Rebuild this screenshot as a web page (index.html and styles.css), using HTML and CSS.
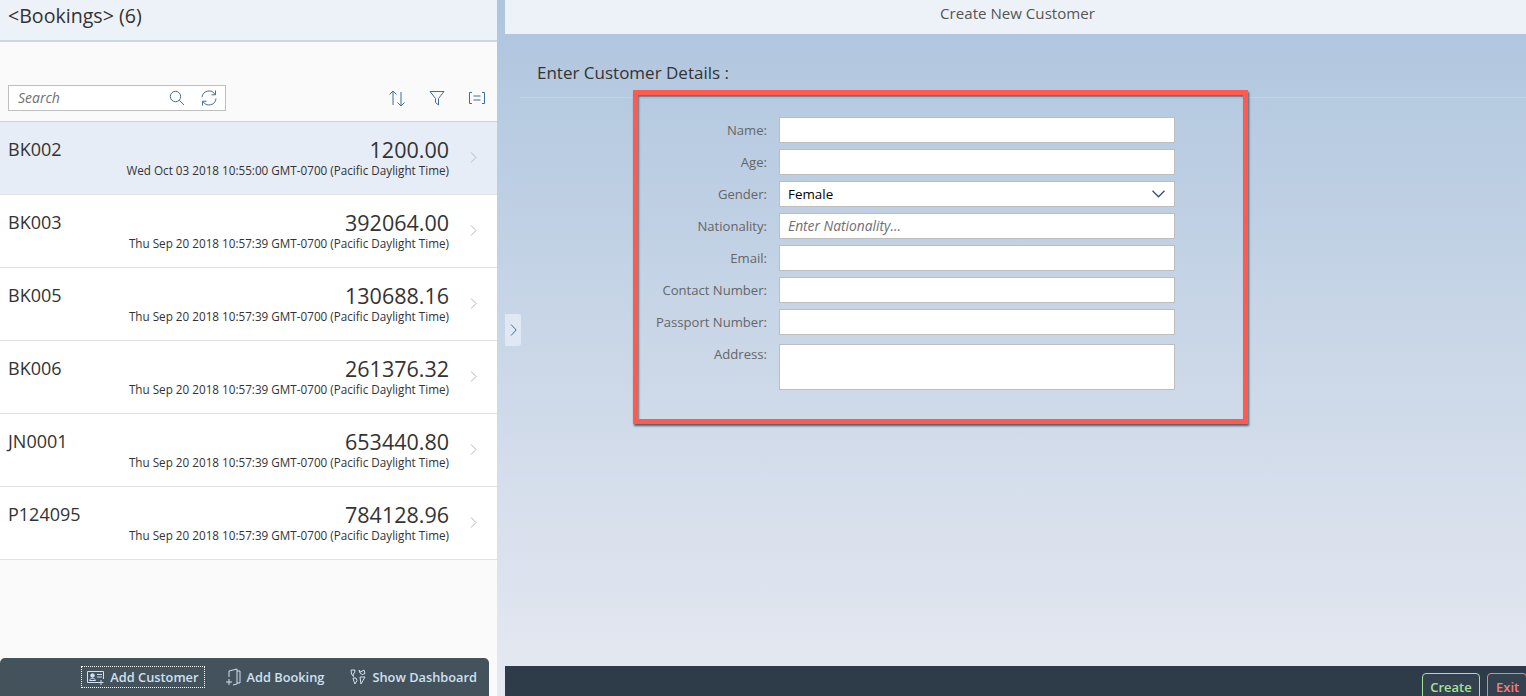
FILE: index.html
```html
<!DOCTYPE html>
<html lang="en">
<head>
    <meta charset="UTF-8">
    <title>Create New Customer</title>
    <link rel="stylesheet" href="styles.css">
</head>
<body>
    <div class="master">
        <div class="master-header">&lt;Bookings&gt; (6)</div>
        <div class="toolbar">
            <div class="search">
                <span class="search-text">Search</span>
                <svg class="search-icon" width="16" height="16" viewBox="0 0 16 16"><circle cx="6.5" cy="6.5" r="5.2"/><path d="M10.3 10.3 L15 15"/></svg>
                <svg class="search-icon" width="18" height="18" viewBox="0 0 18 18"><path d="M2 8 A7 7 0 0 1 15 5.5 M16 9.5 A7 7 0 0 1 3 12.5 M15.5 1.5 V5.8 H11.5 M2.5 16.5 V12.2 H6.5"/></svg>
            </div>
            <div class="tools">
                <svg width="18" height="18" viewBox="0 0 18 18"><path d="M5 16 V2 M1.5 5.5 L5 2 L8.5 5.5 M13 3 V17 M9.5 13.5 L13 17 L16.5 13.5"/></svg>
                <svg width="16" height="16" viewBox="0 0 16 16"><path d="M1 1.5 H15 L9.5 8.5 V15 L6.5 12.5 V8.5 Z"/></svg>
                <svg width="18" height="14" viewBox="0 0 18 14"><path d="M4 1.5 H1.5 V12.5 H4 M14 1.5 H16.5 V12.5 H14 M5.5 5 H12.5 M5.5 9 H12.5"/></svg>
            </div>
        </div>
        <ul class="list">
            <li class="row row-active">
                <span class="row-id">BK002</span>
                <div class="row-info"><div class="row-amount">1200.00</div><div class="row-date">Wed Oct 03 2018 10:55:00 GMT-0700 (Pacific Daylight Time)</div></div>
                <svg class="row-arrow" width="7" height="11" viewBox="0 0 7 11"><path d="M1 .5 L6 5.5 L1 10.5"/></svg>
            </li>
            <li class="row">
                <span class="row-id">BK003</span>
                <div class="row-info"><div class="row-amount">392064.00</div><div class="row-date">Thu Sep 20 2018 10:57:39 GMT-0700 (Pacific Daylight Time)</div></div>
                <svg class="row-arrow" width="7" height="11" viewBox="0 0 7 11"><path d="M1 .5 L6 5.5 L1 10.5"/></svg>
            </li>
            <li class="row">
                <span class="row-id">BK005</span>
                <div class="row-info"><div class="row-amount">130688.16</div><div class="row-date">Thu Sep 20 2018 10:57:39 GMT-0700 (Pacific Daylight Time)</div></div>
                <svg class="row-arrow" width="7" height="11" viewBox="0 0 7 11"><path d="M1 .5 L6 5.5 L1 10.5"/></svg>
            </li>
            <li class="row">
                <span class="row-id">BK006</span>
                <div class="row-info"><div class="row-amount">261376.32</div><div class="row-date">Thu Sep 20 2018 10:57:39 GMT-0700 (Pacific Daylight Time)</div></div>
                <svg class="row-arrow" width="7" height="11" viewBox="0 0 7 11"><path d="M1 .5 L6 5.5 L1 10.5"/></svg>
            </li>
            <li class="row">
                <span class="row-id">JN0001</span>
                <div class="row-info"><div class="row-amount">653440.80</div><div class="row-date">Thu Sep 20 2018 10:57:39 GMT-0700 (Pacific Daylight Time)</div></div>
                <svg class="row-arrow" width="7" height="11" viewBox="0 0 7 11"><path d="M1 .5 L6 5.5 L1 10.5"/></svg>
            </li>
            <li class="row">
                <span class="row-id">P124095</span>
                <div class="row-info"><div class="row-amount">784128.96</div><div class="row-date">Thu Sep 20 2018 10:57:39 GMT-0700 (Pacific Daylight Time)</div></div>
                <svg class="row-arrow" width="7" height="11" viewBox="0 0 7 11"><path d="M1 .5 L6 5.5 L1 10.5"/></svg>
            </li>
        </ul>
        <div class="master-footer">
            <button class="foot-btn foot-btn-focus">
                <svg width="17" height="16" viewBox="0 0 17 16"><path d="M12 13.5 H.5 V2.5 H16.5 V10"/><circle cx="5.5" cy="6.5" r="1.8" fill="#cfe0f2"/><path d="M2.5 11.5 C2.5 8.8 8.5 8.8 8.5 11.5 Z M10 5.5 H15 M10 8 H15 M14 11 V16 M11.5 13.5 H16.5"/></svg>
                Add Customer
            </button>
            <button class="foot-btn">
                <svg width="16" height="18" viewBox="0 0 16 18"><path d="M4 9 V3 L12 1 V16 L8 17 M12 3 H15 V15 H12 M1 14 H7 M4 11 V17"/></svg>
                Add Booking
            </button>
            <button class="foot-btn">
                <svg width="16" height="16" viewBox="0 0 16 16"><path d="M1 1 H5 L4.5 4 L3 5 L3.5 7.5 L1.5 5 Z M9 1 L10.5 3 L14 1 L15 4.5 L12.5 5.5 L10 4 Z M3 9 L6 9 L7 11.5 L5 15 L4 12.5 Z M10 8 H15 L13 11.5 L11 15 Z"/></svg>
                Show Dashboard
            </button>
        </div>
    </div>

    <div class="detail">
        <div class="detail-header">Create New Customer</div>
        <button class="expand"><svg width="7" height="12" viewBox="0 0 7 12"><path d="M1 .5 L6.2 6 L1 11.5"/></svg></button>
        <div class="detail-content">
            <h2 class="form-title">Enter Customer Details :</h2>
            <div class="form-box">
                <form class="form">
                    <label>Name:</label><input class="field" type="text">
                    <label>Age:</label><input class="field" type="text">
                    <label>Gender:</label>
                    <div class="field select">Female<svg width="13" height="8" viewBox="0 0 13 8"><path d="M.5 .8 L6.5 6.8 L12.5 .8"/></svg></div>
                    <label>Nationality:</label><input class="field" type="text" placeholder="Enter Nationality...">
                    <label>Email:</label><input class="field" type="text">
                    <label>Contact Number:</label><input class="field" type="text">
                    <label>Passport Number:</label><input class="field" type="text">
                    <label class="label-address">Address:</label><textarea class="field address"></textarea>
                </form>
            </div>
        </div>
        <div class="detail-footer">
            <button class="act act-create">Create</button>
            <button class="act act-exit">Exit</button>
        </div>
    </div>
</body>
</html>
```

FILE: styles.css
```css
* {
    box-sizing: border-box;
}

html, body {
    height: 100%;
}

body {
    margin: 0;
    height: 100vh;
    overflow: hidden;
    display: flex;
    font-family: 'Open Sans', sans-serif;
    color: #333;
    background: linear-gradient(#aec5de, #e6e9f1);
}

svg {
    fill: none;
    stroke: #3f6f9a;
    stroke-width: 1;
    flex: none;
}

/* Left side */
.master {
    width: 497px;
    height: 100%;
    display: flex;
    flex-direction: column;
    background-color: #fafafa;
}

.master-header {
    height: 42px;
    padding: 1px 8px 0;
    font-size: 19.6px;
    line-height: 29px;
    background-color: #edf2f8;
    border-bottom: 2px solid #c5d8ea;
}

.toolbar {
    height: 80px;
    padding: 43px 11px 0 8px;
    display: flex;
    align-items: flex-start;
    justify-content: space-between;
    border-bottom: 1px solid #cfcfcf;
}

.search {
    width: 218px;
    height: 26px;
    padding: 0 7px 0 9px;
    display: flex;
    align-items: center;
    background-color: #fff;
    border: 1px solid #bfbfbf;
}

.search-text {
    flex: 1;
    font-size: 14px;
    line-height: 24px;
    font-style: italic;
    color: #707070;
}

.search-icon + .search-icon {
    margin-left: 15px;
}

.tools {
    display: flex;
    align-items: center;
    gap: 23px;
    height: 26px;
}

.list {
    list-style: none;
    margin: 0;
    padding: 0;
}

.row {
    height: 73px;
    padding: 15px 20px 0 8px;
    display: flex;
    align-items: flex-start;
    background-color: #fff;
    border-bottom: 1px solid #e2e2e2;
}

.row-active {
    background-color: #e7edf6;
}

.row-id {
    font-size: 18px;
    line-height: 25px;
}

.row-info {
    flex: 1;
    text-align: right;
    padding-right: 21px;
}

.row-amount {
    font-size: 21.5px;
    line-height: 25px;
}

.row-date {
    font-size: 11.7px;
    line-height: 17px;
}

.row-arrow {
    margin-top: 15px;
    stroke: #b5b5b5;
}

.master-footer {
    margin-top: auto;
    width: 489px;
    height: 38px;
    padding-right: 6px;
    display: flex;
    align-items: center;
    justify-content: flex-end;
    gap: 14px;
    background-color: #44525c;
    border-radius: 5px 5px 0 0;
}

.foot-btn {
    height: 22px;
    padding: 0 5px;
    display: flex;
    align-items: center;
    gap: 6px;
    font-family: inherit;
    font-size: 12.8px;
    font-weight: 600;
    color: #cfe0f2;
    background: none;
    border: 1px solid transparent;
}

.foot-btn svg {
    stroke: #cfe0f2;
}

.foot-btn-focus {
    border: 1px dotted #fff;
}

/* Right side */
.detail {
    position: relative;
    margin-left: 8px;
    flex: 1;
    height: 100%;
    display: flex;
    flex-direction: column;
}

.detail-header {
    height: 34px;
    padding-left: 4px;
    text-align: center;
    font-size: 15.1px;
    line-height: 27px;
    color: #555;
    background-color: #edf2f8;
}

.expand {
    position: absolute;
    left: 0;
    top: 314px;
    width: 16px;
    height: 32px;
    padding: 0;
    display: flex;
    align-items: center;
    justify-content: center;
    background-color: #dfe8f3;
    border: none;
    border-radius: 0 3px 3px 0;
}

.detail-content {
    flex: 1;
    position: relative;
}

.form-title {
    margin: 0 0 0 15px;
    padding: 26px 0 0 17px;
    height: 64px;
    font-size: 17px;
    font-weight: 400;
    line-height: 25px;
    border-bottom: 1px solid #c5d3e2;
}

.form-box {
    position: absolute;
    left: 128px;
    top: 56px;
    width: 615px;
    height: 334px;
    padding: 22px 0 0 0;
    border: 5px solid #ff5a4f;
    box-shadow: 1px 2px 2px rgba(40, 50, 60, .75), inset 1px 2px 2px rgba(40, 50, 60, .6);
}

.form {
    display: grid;
    grid-template-columns: 129px 396px;
    column-gap: 12px;
    row-gap: 6px;
    grid-auto-rows: 26px;
    align-items: center;
}

.form label {
    text-align: right;
    font-size: 13.1px;
    color: #666;
}

.field {
    width: 100%;
    height: 26px;
    margin: 0;
    padding: 0 8px;
    font-family: inherit;
    font-size: 13.4px;
    color: #000;
    background-color: #fff;
    border: 1px solid #bdbdbd;
    border-radius: 0;
    outline: none;
}

.field::placeholder {
    font-size: 13.8px;
    font-style: italic;
    color: #707070;
    opacity: 1;
}

.select {
    display: flex;
    align-items: center;
    justify-content: space-between;
    padding-right: 9px;
}

.select svg {
    stroke: #34507c;
    stroke-width: 1.3;
}

.address {
    height: 46px;
    margin-top: 3px;
    align-self: start;
    resize: none;
    display: block;
}

.label-address {
    align-self: start;
    margin-top: 4px;
}

.detail-footer {
    height: 30px;
    padding: 7px 0 0 0;
    display: flex;
    justify-content: flex-end;
    gap: 7px;
    overflow: hidden;
    background-color: #2e3b48;
}

.act {
    width: 58px;
    height: 32px;
    padding: 0 0 5px;
    font-family: inherit;
    font-size: 13px;
    font-weight: 600;
    background-color: #34424f;
    border: 1px solid;
    border-radius: 4px;
}

.act-create {
    color: #a5e39a;
    border-color: #a5e39a;
}

.act-exit {
    width: 40px;
    margin-right: -1px;
    color: #ff7a7a;
    border-color: #ff7a7a;
    text-align: left;
    padding-left: 8px;
}
```
